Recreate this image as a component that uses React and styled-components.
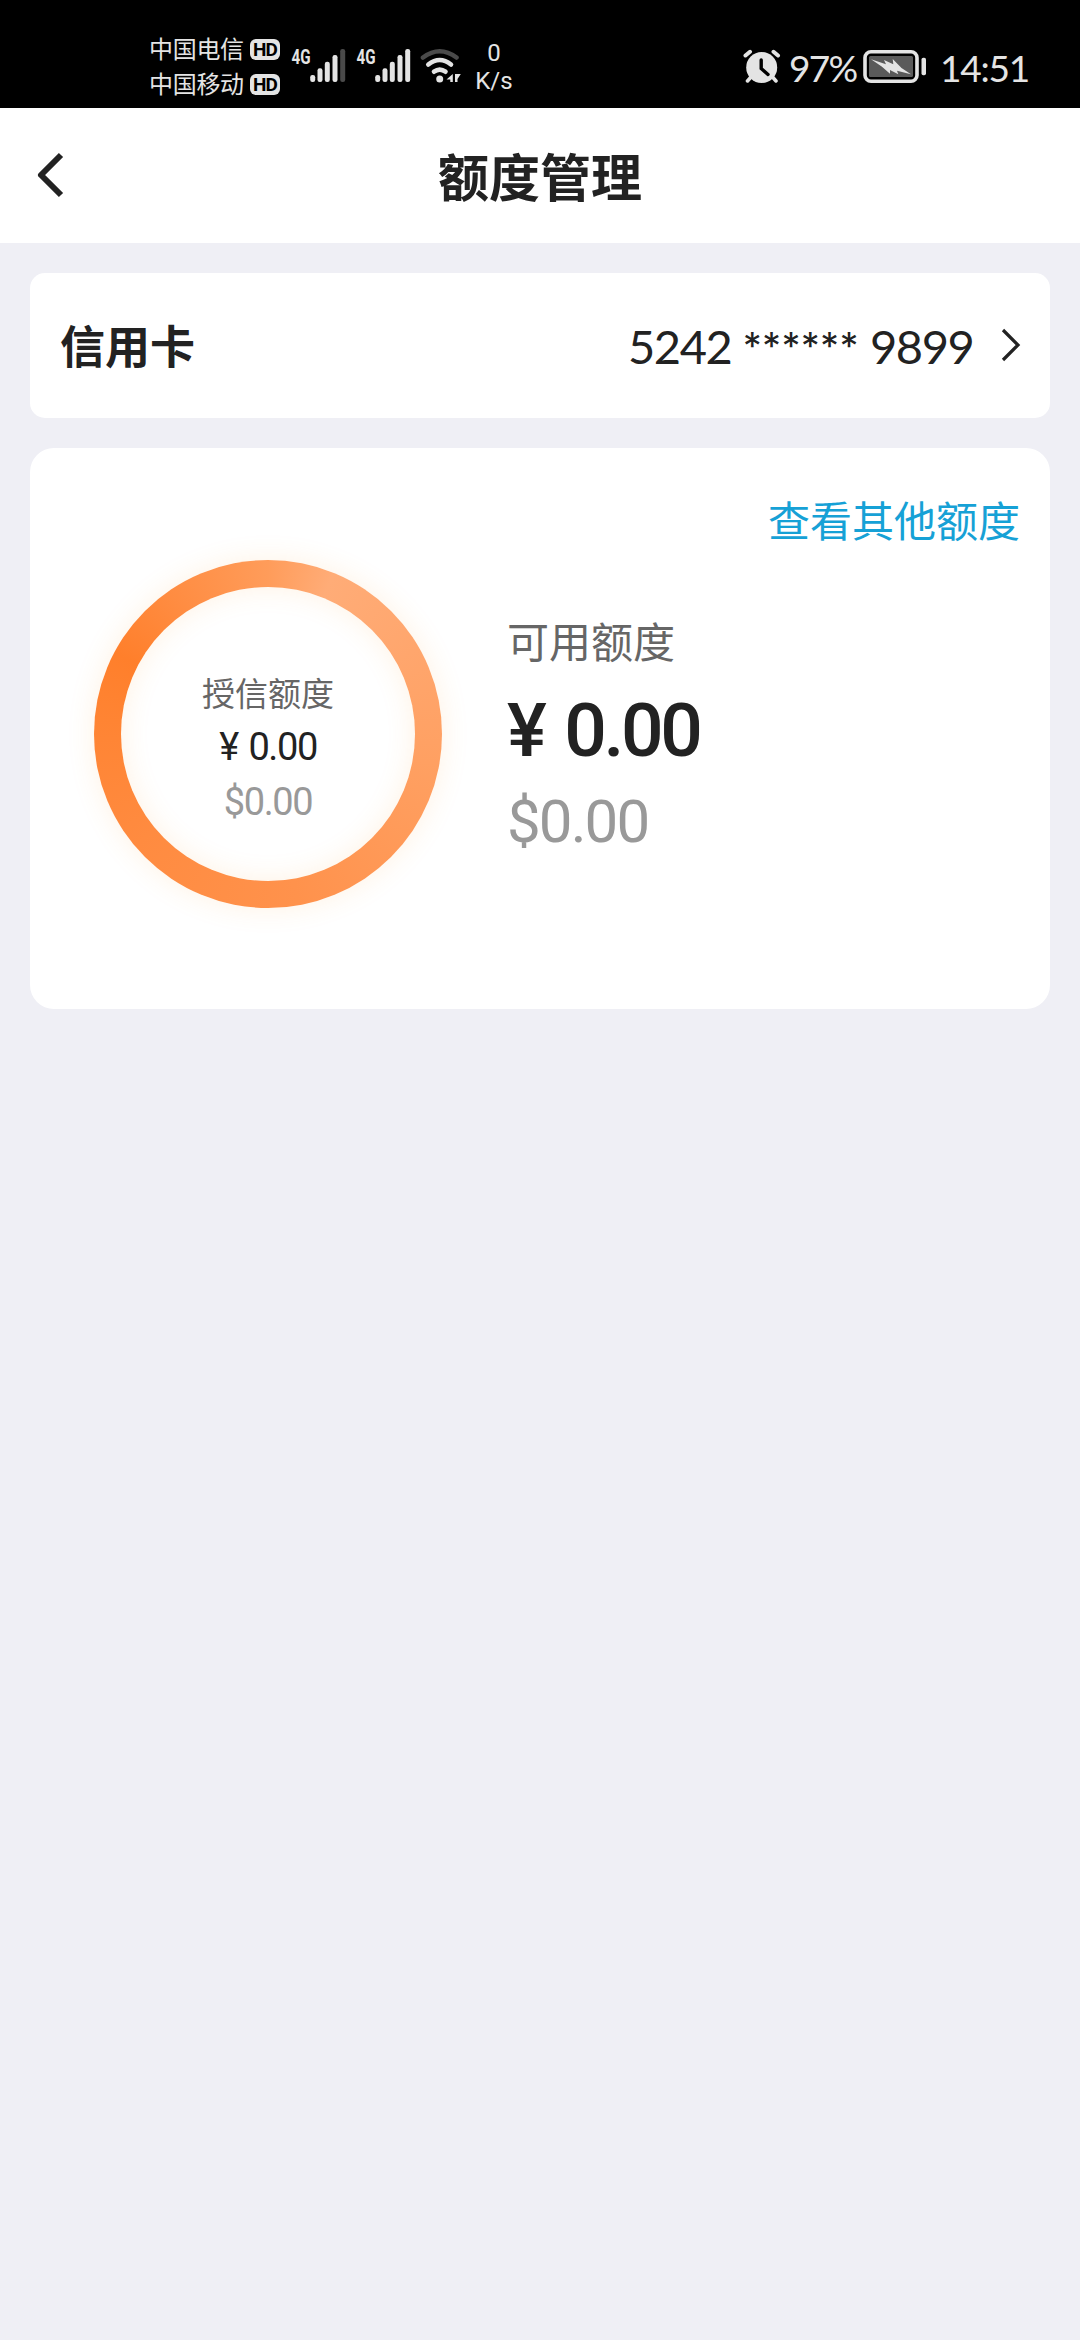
import React from 'react';
import styled, { createGlobalStyle } from 'styled-components';

const GlobalStyle = createGlobalStyle`
  * {
    box-sizing: border-box;
  }

  body {
    margin: 0;
    background: #efeff5;
    font-family: 'Noto Sans CJK SC', 'Noto Sans', sans-serif;
    color: #222;
  }
`;

const Page = styled.div`
  width: 1080px;
  min-height: 2340px;
  display: flex;
  flex-direction: column;
  background: #efeff5;
`;

const StatusBar = styled.div`
  height: 108px;
  padding: 30px 0 0 149px;
  display: flex;
  align-items: flex-start;
  background: #000;
  color: #e4e4e4;
`;

const Carriers = styled.div`
  width: 141px;
  display: flex;
  flex-direction: column;
`;

const Carrier = styled.div`
  height: 35px;
  display: flex;
  align-items: center;
  gap: 6px;
  font-size: 24px;
  line-height: 35px;
`;

const CarrierName = styled.span`
  width: 95px;
  letter-spacing: -0.3px;
  white-space: nowrap;
`;

const HdBadge = styled.span`
  width: 30px;
  height: 21px;
  margin-top: 4px;
  border-radius: 6px;
  background: #e4e4e4;
  color: #000;
  font: 700 19px/22px Roboto, sans-serif;
  letter-spacing: -0.8px;
  text-align: center;
`;

const StatusIcon = styled.svg`
  flex: none;
  display: block;
  width: ${(props) => props.$width}px;
  height: 54px;
`;

const NetSpeed = styled.div`
  width: 46px;
  margin-left: 8px;
  padding-top: 9px;
  font: 400 24px/28px Roboto, sans-serif;
  text-align: center;
`;

const StatusRight = styled.div`
  margin-left: auto;
  padding-right: 54px;
  display: flex;
`;

const StatusText = styled.div`
  width: ${(props) => props.$width}px;
  margin-left: ${(props) => props.$left}px;
  padding-top: 11px;
  font: 400 37px/54px Lato, sans-serif;
  letter-spacing: ${(props) => props.$spacing}px;
  white-space: nowrap;
`;

const Header = styled.header`
  height: 135px;
  padding: 0 36px 1px;
  display: grid;
  grid-template-columns: 60px 1fr 60px;
  align-items: center;
  background: #fff;
`;

const BackButton = styled.button`
  padding: 0;
  border: none;
  background: none;
  height: 46px;
  justify-self: start;
`;

const Title = styled.h1`
  margin: 0;
  font-size: 51px;
  font-weight: 700;
  line-height: 72px;
  text-align: center;
`;

const Content = styled.main`
  padding: 30px;
  display: flex;
  flex-direction: column;
  gap: 30px;
`;

const CardRow = styled.section`
  height: 145px;
  padding: 0 28px 1px 30px;
  display: flex;
  align-items: center;
  border-radius: 15px;
  background: #fff;
`;

const CardLabel = styled.h2`
  margin: 0 auto 0 0;
  font-size: 45px;
  font-weight: 700;
  line-height: 60px;
`;

const CardNumber = styled.div`
  display: flex;
  margin-right: 28px;
  padding-top: 2px;
  font: 400 47px/60px Lato, sans-serif;
`;

const Digits = styled.span`
  width: ${(props) => props.$width}px;
  letter-spacing: -1.4px;
  white-space: nowrap;
`;

const Mask = styled.span`
  width: 127px;
  font-family: Inter, sans-serif;
  font-size: 37px;
  letter-spacing: 0.8px;
`;

const LimitCard = styled.section`
  height: 561px;
  padding: 41px 30px 0;
  border-radius: 24px;
  background: #fff;
`;

const OtherLimits = styled.a`
  display: block;
  font-size: 42px;
  line-height: 60px;
  text-align: right;
  color: #16a1d6;
`;

const LimitBody = styled.div`
  display: flex;
  padding: 11px 0 0 34px;
`;

const Ring = styled.div`
  width: 348px;
  height: 348px;
  padding: 27px;
  border-radius: 50%;
  background: conic-gradient(
    #ff9c5a 0deg,
    #ffac77 22deg,
    #ffa66d 60deg,
    #ffa062 100deg,
    #ff924c 170deg,
    #ff8b40 230deg,
    #ff8433 275deg,
    #ff7f2b 298deg,
    #ff8c41 325deg,
    #ff9c5a 360deg
  );
  box-shadow: 0 0 28px rgba(255, 165, 60, 0.14);
`;

const RingInner = styled.div`
  width: 294px;
  height: 294px;
  padding-top: 79px;
  border-radius: 50%;
  background: #fff;
  box-shadow: inset 0 0 28px rgba(255, 165, 60, 0.14);
  text-align: center;
`;

const Label = styled.div`
  font-size: ${(props) => props.$size}px;
  line-height: ${(props) => props.$line}px;
  color: #666;
`;

const Amount = styled.div`
  padding-top: ${(props) => props.$top || 0}px;
  font-family: Roboto, sans-serif;
  font-size: ${(props) => props.$size}px;
  font-weight: ${(props) => props.$weight || 400};
  line-height: ${(props) => props.$line}px;
  letter-spacing: ${(props) => props.$spacing}px;
  word-spacing: 0.07em;
  color: ${(props) => (props.$muted ? '#999' : '#222')};
  white-space: nowrap;
`;

const Available = styled.div`
  margin: 50px 0 0 65px;
`;

const bars = [
  [22.7, 29],
  [30, 22.3],
  [37.3, 15.7],
  [45, 9],
  [52.7, 3],
];

function Signal({ level }) {
  return (
    <StatusIcon $width={65} viewBox="0 -16 65 54">
      <text
        x="1.5"
        y="18"
        fill="#e4e4e4"
        fontFamily="Roboto"
        fontWeight="700"
        fontSize="21"
        textLength="19"
        lengthAdjust="spacingAndGlyphs"
      >
        4G
      </text>
      {bars.map(([x, top], i) => (
        <rect
          key={x}
          x={x - 2.5}
          y={top}
          width="5"
          height={36 - top}
          rx="2.2"
          fill={i < level ? '#e4e4e4' : '#4a4a4a'}
        />
      ))}
    </StatusIcon>
  );
}

function Wifi() {
  return (
    <StatusIcon $width={43} viewBox="420 30 43 54" fill="none" strokeLinecap="round" strokeWidth="4.6">
      <path d="M423 57.5Q439.7 45 456.5 57.5" stroke="#4a4a4a" />
      <path d="M428.3 64.5Q439.7 55.5 451 64.5" stroke="#e4e4e4" />
      <path d="M434 71.7Q439.7 67.5 445.5 71.7" stroke="#e4e4e4" />
      <circle cx="439.7" cy="79" r="3.5" fill="#e4e4e4" />
      <path d="M452.8 74v8h-2.5v-2.5h-3.8zM455 82v-8h5.8l-3.3 5v3z" fill="#e4e4e4" />
    </StatusIcon>
  );
}

function Alarm() {
  return (
    <StatusIcon $width={38} viewBox="743 30 38 54" fill="none" stroke="#e4e4e4" strokeLinecap="round">
      <path d="M751 77l-3.5 4M772.5 77l3.5 4" strokeWidth="3.5" />
      <circle cx="761.7" cy="67.5" r="15.5" fill="#e4e4e4" stroke="none" />
      <path d="M745.5 55.5l4.5-3.7M778 55.5l-4.5-3.7" strokeWidth="4" />
      <path d="M761.2 60v8.5l6.8 6" stroke="#000" strokeWidth="3.4" />
    </StatusIcon>
  );
}

function Battery() {
  return (
    <StatusIcon $width={64} viewBox="863 30 64 54">
      <rect x="865" y="51.7" width="52" height="29.6" rx="6" fill="none" stroke="#e4e4e4" strokeWidth="3.6" />
      <rect x="869" y="56" width="44" height="21" rx="1.5" fill="#5a5a5a" />
      <rect x="921.5" y="57.8" width="4.5" height="17.4" rx="1.8" fill="#e4e4e4" />
      <path
        d="M871 59.3L886 64.3L884 60L893.3 64.3L892.7 59L901.5 68L911 74.3L897 70.7L898.3 74.3L890 70L890 73.7L881.7 66.5Z"
        fill="#e4e4e4"
      />
    </StatusIcon>
  );
}

function App() {
  return (
    <Page>
      <GlobalStyle />
      <StatusBar>
        <Carriers>
          {['中国电信', '中国移动'].map((name) => (
            <Carrier key={name}>
              <CarrierName>{name}</CarrierName>
              <HdBadge>HD</HdBadge>
            </Carrier>
          ))}
        </Carriers>
        <Signal level={4} />
        <Signal level={5} />
        <Wifi />
        <NetSpeed>
          0<br />
          K/s
        </NetSpeed>
        <StatusRight>
          <Alarm />
          <StatusText $width={74} $left={8} $spacing={-1.7}>97%</StatusText>
          <Battery />
          <StatusText $width={86} $left={13} $spacing={-1.2}>14:51</StatusText>
        </StatusRight>
      </StatusBar>

      <Header>
        <BackButton>
          <svg width="30" height="46" viewBox="0 0 30 46" fill="none" stroke="#222" strokeWidth="6">
            <path d="M25 3L5 23l20 20" strokeLinejoin="round" />
          </svg>
        </BackButton>
        <Title>额度管理</Title>
      </Header>

      <Content>
        <CardRow>
          <CardLabel>信用卡</CardLabel>
          <CardNumber>
            <Digits $width={115}>5242</Digits>
            <Mask>******</Mask>
            <Digits $width={102}>9899</Digits>
          </CardNumber>
          <svg width="22" height="34" viewBox="0 0 22 34" fill="none" stroke="#222" strokeWidth="3.2">
            <path d="M3 2l15 15L3 32" />
          </svg>
        </CardRow>

        <LimitCard>
          <OtherLimits>查看其他额度</OtherLimits>
          <LimitBody>
            <Ring>
              <RingInner>
                <Label $size={33} $line={52}>授信额度</Label>
                <Amount $size={38} $line={54} $spacing={-1.4} $top={2}>¥ 0.00</Amount>
                <Amount $size={38} $line={56} $spacing={-1.4} $muted>$0.00</Amount>
              </RingInner>
            </Ring>
            <Available>
              <Label $size={42} $line={60}>可用额度</Label>
              <Amount $size={75} $line={110} $weight={500} $spacing={-3.3} $top={5}>¥ 0.00</Amount>
              <Amount $size={60} $line={73} $spacing={-1.9} $muted>$0.00</Amount>
            </Available>
          </LimitBody>
        </LimitCard>
      </Content>
    </Page>
  );
}

export default App;
